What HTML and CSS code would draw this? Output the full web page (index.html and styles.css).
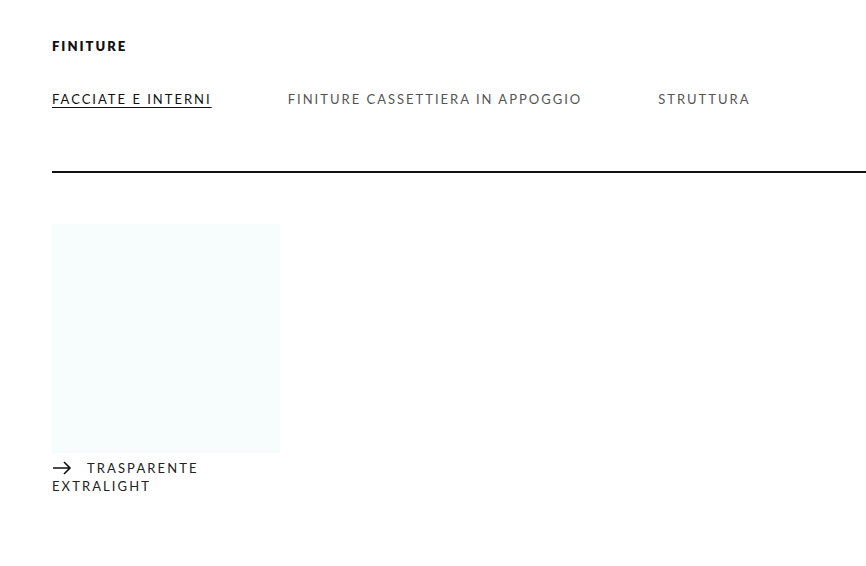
FILE: index.html
```html
<!DOCTYPE html>
<html lang="it">
<head>
<meta charset="utf-8">
<title>Finiture</title>
<link rel="stylesheet" href="styles.css">
</head>
<body>
<main class="page">
  <h2 class="title">FINITURE</h2>
  <nav class="tabs">
    <a class="tab active" href="#">FACCIATE E INTERNI</a>
    <a class="tab" href="#">FINITURE CASSETTIERA IN APPOGGIO</a>
    <a class="tab" href="#">STRUTTURA</a>
  </nav>
  <div class="rule"></div>
  <section class="grid">
    <div class="item">
      <div class="swatch"></div>
      <div class="label">
        <svg class="arrow" width="20" height="14" viewBox="0 0 20 14"><path d="M1 7H18M12 1L18 7L12 13" fill="none" stroke="#111" stroke-width="1.6"/></svg>
        <span>TRASPARENTE EXTRALIGHT</span>
      </div>
    </div>
  </section>
</main>
</body>
</html>
```
FILE: styles.css
```css
html, body { margin: 0; padding: 0; background: #fff; }
body { font-family: "Lato", "Liberation Sans", sans-serif; color: #111; overflow: hidden; }
.page { padding: 38px 0 0 52px; }
.title { margin: 0; font-size: 13px; font-weight: 800; letter-spacing: 2px; line-height: 16px; }
.tabs { display: flex; gap: 76px; margin-top: 37px; }
.tab { font-size: 13px; letter-spacing: 2px; line-height: 16px; color: #555; text-decoration: none; }
.tab.active { color: #111; text-decoration: underline; text-underline-offset: 3px; text-decoration-thickness: 1px; }
.rule { height: 2px; background: #111; margin-top: 64px; }
.grid { display: flex; margin-top: 51px; }
.item { width: 228px; }
.swatch { height: 229px; background: #f7fcfc; }
.label { margin-top: 6px; font-size: 13px; letter-spacing: 2.1px; line-height: 18px; color: #222; }
.arrow { vertical-align: -2px; margin-right: 10px; }
```
